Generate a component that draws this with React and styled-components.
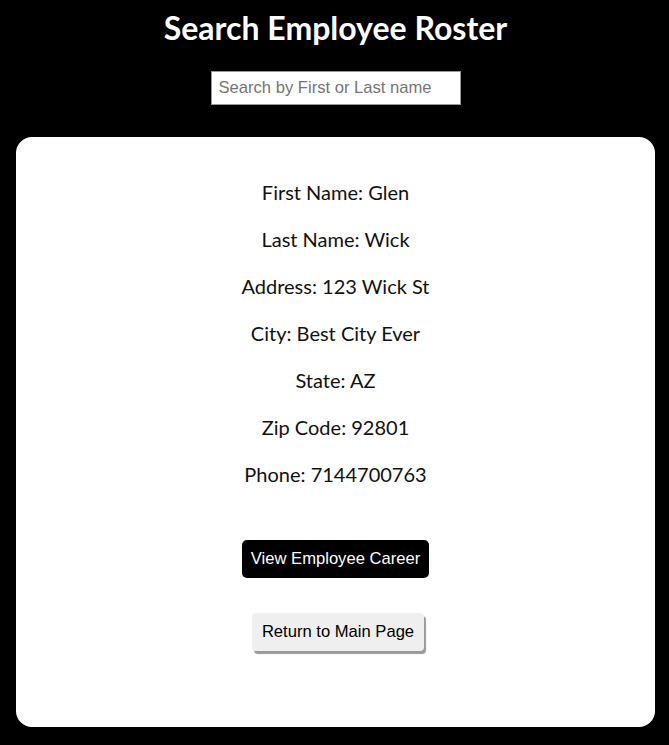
import React from "react";
import styled, { createGlobalStyle } from "styled-components";

const GlobalStyle = createGlobalStyle`
    body {
        margin: 0;
        background-color: #000;
        font-family: "Lato", "Open Sans", sans-serif;
    }
`;

const StyledRoster = styled.div`
    display: flex;
    flex-direction: column;
    align-items: center;
    padding: 8px 14px 18px 16px;

    .title {
        margin: 0;
        color: #fff;
        font-size: 32px;
        line-height: 40px;
        font-weight: 700;
    }

    .search {
        margin-top: 23px;
        width: 250px;
        height: 34px;
        box-sizing: border-box;
        border: 1px solid #999;
        padding: 0 7px;
        font-family: "Liberation Sans", Arial, sans-serif;
        font-size: 16.6px;
        outline: none;
        &::placeholder {
            color: #757575;
        }
    }

    .card {
        margin-top: 32px;
        align-self: stretch;
        height: 590px;
        box-sizing: border-box;
        background-color: #fff;
        border-radius: 16px;
        padding-top: 32px;
        display: flex;
        flex-direction: column;
        align-items: center;
    }

    .field {
        margin: 10px 0;
        font-size: 20px;
        line-height: 27px;
        color: #111;
    }
`;

const Button = styled.button`
    font-family: "Liberation Sans", Arial, sans-serif;
    font-size: 16.6px;
    line-height: 18px;
    cursor: pointer;
    border: none;
    border-radius: ${(p) => (p.dark ? "5px" : "4px")};
    background-color: ${(p) => (p.dark ? "#000" : "#efefef")};
    color: ${(p) => (p.dark ? "#fff" : "#000")};
    padding: ${(p) => (p.dark ? "10px 9px" : "10px 10px")};
    margin: ${(p) => (p.dark ? "42px 0 0 0" : "35px 0 0 5px")};
    box-shadow: ${(p) => (p.dark ? "none" : "2px 3px 1px #999")};
`;

const employee = [
    ["First Name", "Glen"],
    ["Last Name", "Wick"],
    ["Address", "123 Wick St"],
    ["City", "Best City Ever"],
    ["State", "AZ"],
    ["Zip Code", "92801"],
    ["Phone", "7144700763"],
];

const App = () => {
    return (
        <StyledRoster>
            <GlobalStyle />
            <h1 className={"title"}>Search Employee Roster</h1>
            <input className={"search"} placeholder={"Search by First or Last name"} />
            <section className={"card"}>
                {employee.map(([label, value]) => (
                    <p className={"field"} key={label}>
                        {label}: {value}
                    </p>
                ))}
                <Button dark>View Employee Career</Button>
                <Button>Return to Main Page</Button>
            </section>
        </StyledRoster>
    );
};

export default App;
